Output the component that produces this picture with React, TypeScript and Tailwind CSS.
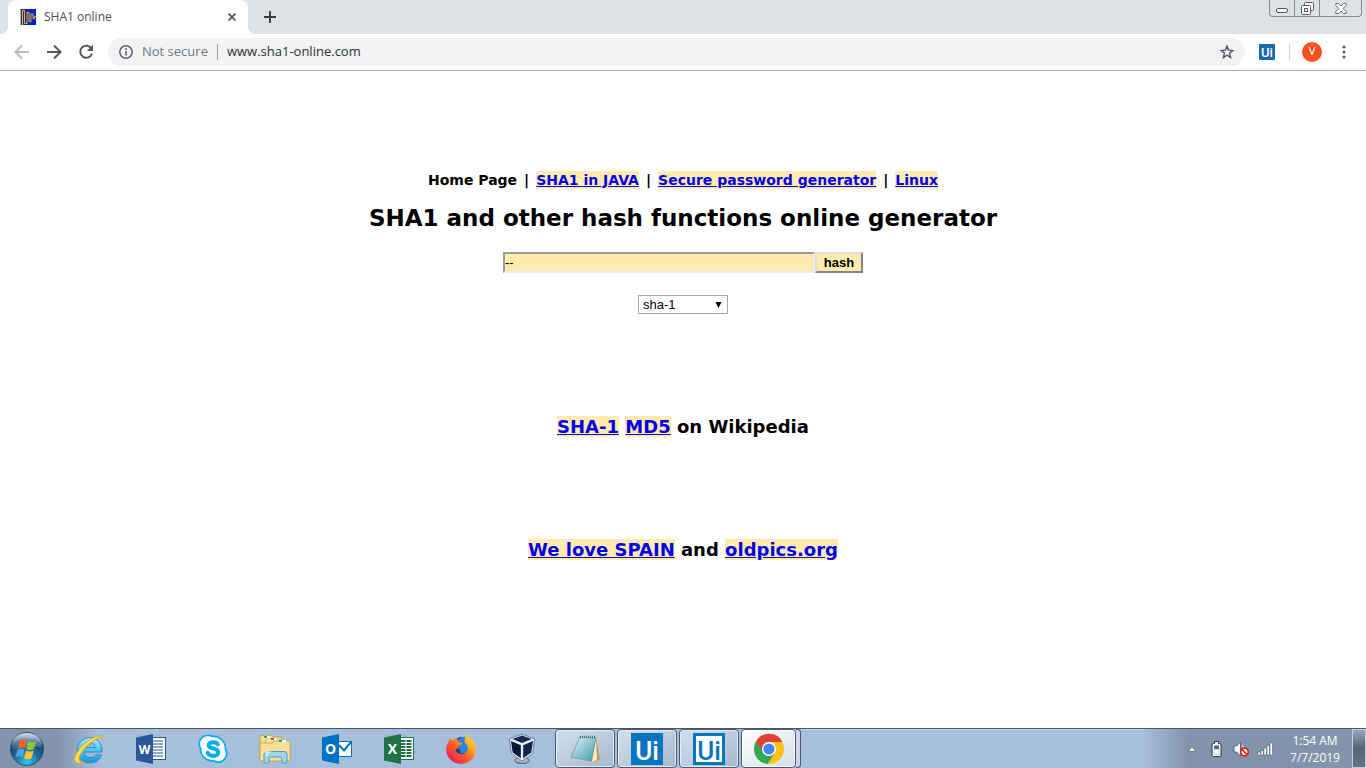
import React, { useState } from "react";

const ui = "font-['Open_Sans','Noto_Sans',sans-serif]";

function Favicon() {
  return (
    <svg className="size-4" viewBox="0 0 16 16" aria-hidden="true">
      <rect width="16" height="16" fill="#0a22c8" />
      <path d="M.5 0v16M2.500 16V1.500h2V14.500h2.500V3.500h2v9h2V5h2v4.500h1.500V7.500H16" fill="none" stroke="#e8b80e" strokeWidth="1" />
    </svg>
  );
}

function UiMark({ className }: { className: string }) {
  return <span className={`flex items-center justify-center font-['Roboto',sans-serif] font-medium leading-none ${className}`}>Ui</span>;
}

function TabStrip() {
  return (
    <div className="flex h-[34px] items-start justify-between bg-[#dee1e6]">
      <div className="flex h-full items-center pl-2">
        <div className="relative flex h-full w-60 items-center rounded-t-lg bg-white pl-3 pr-2">
          <span className="absolute -left-2 bottom-0 size-2 bg-[radial-gradient(circle_at_top_left,transparent_8px,white_8px)]" />
          <span className="absolute -right-2 bottom-0 size-2 bg-[radial-gradient(circle_at_top_right,transparent_8px,white_8px)]" />
          <Favicon />
          <span className="ml-2 flex-1 text-xs text-[#4b4f54]">SHA1 online</span>
          <button aria-label="Close tab" className="flex size-4 items-center justify-center">
            <svg className="size-2" viewBox="0 0 8 8" fill="none" stroke="#4f5358" strokeWidth="1.600"><path d="M.5.5l7 7M7.500.5l-7 7" /></svg>
          </button>
        </div>
        <button aria-label="New tab" className="ml-3.5 flex size-4 items-center justify-center">
          <svg className="size-3" viewBox="0 0 12 12" fill="none" stroke="#3c4043" strokeWidth="2"><path d="M6 0v12M0 6h12" /></svg>
        </button>
      </div>
      <div className="mr-1 flex h-[17px] rounded-b border border-t-0 border-[#85888d]">
        <button aria-label="Minimize" className="flex w-[25px] items-end justify-center border-r border-[#85888d] pb-[3px]">
          <svg width="12" height="5" viewBox="0 0 12 5"><rect x=".5" y=".5" width="11" height="4" rx="1.500" fill="#fff" stroke="#55585c" /></svg>
        </button>
        <button aria-label="Restore" className="flex w-[25px] items-center justify-center border-r border-[#85888d]">
          <svg width="13" height="13" viewBox="0 0 13 13" fill="#fff" stroke="#55585c"><rect x="3.500" y=".5" width="9" height="8" rx="1" /><rect x=".5" y="3.500" width="9" height="9" rx="1" /><rect x="3.500" y="6.500" width="3" height="3" /></svg>
        </button>
        <button aria-label="Close" className="flex w-[41px] items-center justify-center">
          <svg width="12" height="11" viewBox="0 0 12 11"><path d="M.8.5h2.700L6 3 8.500.5h2.700v1.800L8.200 5.500l3 3v2H8.500L6 8l-2.500 2.500H.8v-2l3-3-3-3.200z" fill="#fff" stroke="#66696d" /></svg>
        </button>
      </div>
    </div>
  );
}

function Toolbar() {
  return (
    <div className="flex h-[37px] items-center border-b border-[#b3b3b3] bg-white px-3.5">
      <div className="flex items-center gap-4">
        <button aria-label="Back"><svg className="size-4" viewBox="0 0 16 16" fill="none" stroke="#babcbe" strokeWidth="1.900"><path d="M15 8H2M8 1.500L1.500 8 8 14.500" /></svg></button>
        <button aria-label="Forward"><svg className="size-4" viewBox="0 0 16 16" fill="none" stroke="#55585d" strokeWidth="2"><path d="M1 8h13M8 1.500L14.500 8 8 14.500" /></svg></button>
        <button aria-label="Reload"><svg className="size-4" viewBox="0 0 16 16"><path d="M13.600 5A6 6 0 1 0 14 9.500" fill="none" stroke="#55585d" strokeWidth="2" /><path d="M15 .8V7H8.800z" fill="#55585d" /></svg></button>
      </div>
      <div className="ml-3.5 flex h-7 flex-1 items-center rounded-full bg-[#f1f3f4] pl-[11px] pr-2.5">
        <svg className="size-3.5" viewBox="0 0 14 14"><circle cx="7" cy="7" r="6.200" fill="none" stroke="#5f6368" strokeWidth="1.500" /><path d="M7 6v4.500M7 3.300V5" stroke="#5f6368" strokeWidth="1.600" /></svg>
        <span className="ml-[9px] text-[13px] text-[#74777b]">Not secure</span>
        <span className="ml-[9px] mr-[9px] h-4 w-px bg-[#9b9ea2]" />
        <input aria-label="Address" defaultValue="www.sha1-online.com" className="min-w-0 flex-1 bg-transparent text-[13px] text-[#2d3034] outline-none" />
        <button aria-label="Bookmark this page"><svg className="size-4" viewBox="0 0 16 16"><path d="M8 2.200l1.600 3.900 4.200.4-3.200 2.800 1 4.100L8 11.200l-3.600 2.200 1-4.100-3.200-2.800 4.200-.4z" fill="none" stroke="#4f5358" strokeWidth="1.400" /></svg></button>
      </div>
      <button aria-label="UiPath extension" className="ml-3.5"><UiMark className="size-4 rounded-[1px] bg-[#1b67b0] text-[13px] text-white" /></button>
      <span className="ml-3.5 h-4 w-px bg-[#cfd1d4]" />
      <button aria-label="Profile" className="ml-3 flex size-5 items-center justify-center rounded-full bg-[#f4511e] font-['Roboto',sans-serif] text-[11px] text-white">V</button>
      <button aria-label="Menu" className="ml-3.5 flex w-4 justify-center"><svg width="4" height="14" viewBox="0 0 4 14" fill="#55585d"><circle cx="2" cy="2" r="1.500" /><circle cx="2" cy="7" r="1.500" /><circle cx="2" cy="12" r="1.500" /></svg></button>
    </div>
  );
}

function PageLink({ children }: { children: React.ReactNode }) {
  return <a href="#" className="bg-[#ffebad] text-[#0000ee] underline">{children}</a>;
}

function HashPage() {
  const [text, setText] = useState("--");
  return (
    <main className="flex flex-1 flex-col items-center bg-white pt-[100px] font-['DejaVu_Sans',sans-serif] font-bold text-black">
      <nav className="flex flex-wrap justify-center gap-x-[7px] text-sm leading-[18px]">
        <span>Home Page</span>
        <span>|</span>
        <PageLink>SHA1 in JAVA</PageLink>
        <span>|</span>
        <PageLink>Secure password generator</PageLink>
        <span>|</span>
        <PageLink>Linux</PageLink>
      </nav>
      <h1 className="mt-3.5 text-[23px] leading-[30px]">SHA1 and other hash functions online generator</h1>
      <form className="mt-[19px] flex flex-col items-center font-['Liberation_Sans',sans-serif] text-[13px]" onSubmit={(e) => e.preventDefault()}>
        <div className="flex h-[21px]">
          <input aria-label="Text to hash" value={text} onChange={(e) => setText(e.target.value)} className="w-[312px] border-2 border-b-[#eee] border-l-[#9a9a9a] border-r-[#eee] border-t-[#9a9a9a] bg-[#ffebad] font-normal outline-none" />
          <button className="flex w-12 items-center justify-center border-2 border-b-[#858585] border-l-[#ddd] border-r-[#858585] border-t-[#ddd] bg-[#ffebad] font-bold">hash</button>
        </div>
        <div className="mt-[22px] grid">
          <select aria-label="Hash function" className="col-start-1 row-start-1 h-[19px] w-[90px] appearance-none border border-[#a9a9a9] bg-white pl-1 font-normal leading-4">
            <option>sha-1</option>
            <option>md5</option>
            <option>sha-256</option>
            <option>sha-512</option>
          </select>
          <svg className="pointer-events-none col-start-1 row-start-1 mr-1.5 self-center justify-self-end" width="7" height="6" viewBox="0 0 7 6"><path d="M.5 0h6L3.500 6z" /></svg>
        </div>
      </form>
      <p className="mt-[102px] text-lg leading-[22px]"><PageLink>SHA-1</PageLink> <PageLink>MD5</PageLink> on Wikipedia</p>
      <p className="mt-[101px] text-lg leading-[22px]"><PageLink>We love SPAIN</PageLink> and <PageLink>oldpics.org</PageLink></p>
    </main>
  );
}

function StartOrb() {
  return (
    <svg width="36" height="36" viewBox="0 0 36 36">
      <defs>
        <radialGradient id="orb" cx=".5" cy=".9" r=".85"><stop offset="0" stopColor="#39c5ed" /><stop offset=".45" stopColor="#1a6b9e" /><stop offset=".8" stopColor="#1e3e62" /><stop offset="1" stopColor="#7894ad" /></radialGradient>
        <linearGradient id="shine" x2="0" y2="1"><stop offset="0" stopColor="#e8f2fa" stopOpacity=".75" /><stop offset="1" stopColor="#aac6dc" stopOpacity=".15" /></linearGradient>
      </defs>
      <circle cx="18" cy="18" r="16.500" fill="url(#orb)" stroke="#35536c" />
      <path d="M3 17C2 7 10 2 18 2s16 5 15 15c-8-4-20 4-30 0z" fill="url(#shine)" />
      <path d="M11 9.500c2.200-1.500 5-1.300 7-.2l-2 8c-2.200-1-5-1.200-7.200.2z" fill="#ef6325" />
      <path d="M19.300 10.200c2.200 1 5 1.500 7.800.2l-2.200 7.800c-2.500 1.300-5.300 1-7.600 0z" fill="#8ac53e" />
      <path d="M8.500 18.800c2.200-1.400 5-1.200 7.100-.2l-2 7.500c-2.200-1.100-4.900-1.200-7.100.2z" fill="#49a6df" />
      <path d="M17 19.500c2.200 1 5 1.500 7.700.2l-2.200 7.500c-2.500 1.300-5.200 1.100-7.500 0z" fill="#fdc52c" />
    </svg>
  );
}

function ExplorerE() {
  return (
    <svg width="32" height="32" viewBox="0 0 32 32">
      <defs><linearGradient id="ie" x2="0" y2="1"><stop offset="0" stopColor="#a2e9fd" /><stop offset=".5" stopColor="#4fc4f3" /><stop offset="1" stopColor="#1c94d8" /></linearGradient></defs>
      <path d="M29 19H11.200c.2 3.700 2.500 5.600 5.900 5.600 2.500 0 4.200-.9 5.200-2.700h6C26.600 27.400 22.400 30 16.700 30 9.400 30 4.300 24.900 4.300 17.600c0-7.400 5.200-12.900 12.500-12.900C24.400 4.700 29.500 10.700 29 19zM11.300 14.700h11c-.4-3.200-2.500-5.100-5.500-5.100s-5 2-5.500 5.100z" fill="url(#ie)" stroke="#2387c4" strokeWidth=".9" />
      <path d="M29.500 7.500c.8-4-1.500-5.500-6-4C14 6.500 3 17 1.800 25.700c-.5 4.500 3.600 5.500 9.200 3-3.600.9-5.600-.4-5-3.600C7.400 17.800 17.500 8 25.500 4.800c2.500-.8 4.200 0 4 2.700z" fill="#ffe14a" stroke="#e5a71c" strokeWidth=".9" />
    </svg>
  );
}

function OfficeDoc({ letter, color, kind }: { letter: string; color: string; kind: "lines" | "grid" | "mail" }) {
  return (
    <svg width="32" height="32" viewBox="0 0 32 32">
      {kind === "mail" ? (
        <g><rect x="17" y="8.500" width="13.500" height="15" fill="#fff" stroke={color} /><path d="M18 12l5 5.500L30 9" fill="none" stroke={color} strokeWidth="2" /></g>
      ) : (
        <g>
          <rect x="16" y="4.500" width="14.500" height="22" fill="#fff" stroke={color} />
          {kind === "lines" ? <path d="M18 8h10M18 11h10M18 14h10M18 17h10M18 20h10M18 23h10" stroke={color} strokeWidth="1.200" /> : <path d="M18 8h4.500m1 0h5M18 11h4.500m1 0h5M18 14h4.500m1 0h5M18 17h4.500m1 0h5M18 20h4.500m1 0h5M18 23h4.500m1 0h5" stroke={color} strokeWidth="2" />}
        </g>
      )}
      <path d="M1 4.500L18 1v30L1 27.500z" fill={color} />
      <text x="9.500" y="21" textAnchor="middle" fill="#fff" className={letter === "W" ? "font-['Open_Sans',sans-serif] text-[12px] font-bold" : "font-['Open_Sans',sans-serif] text-[14px] font-bold"}>{letter}</text>
    </svg>
  );
}

function Skype() {
  return (
    <svg width="32" height="32" viewBox="0 0 32 32">
      <path d="M10 2.500c2-.4 4 0 5.500 1C23 3 29 9 28.500 16.500c3.500 6-1.500 13-8 12.500-1.300-.1-2.700-.5-4-1.200C9 28.500 3 22.500 3.600 15.200 0 10 4 3.200 10 2.500z" fill="#fff" stroke="#00aff0" strokeWidth="1.700" />
      <path d="M20.800 11.500c-.8-1.700-2.600-2.300-4.700-2.300-2.700 0-4.500 1.200-4.500 3.100 0 4.300 9.500 2.200 9.500 6.900 0 2.400-2.100 3.700-5 3.700-2.600 0-4.500-1-5.400-3.100" fill="none" stroke="#00aff0" strokeWidth="4" strokeLinecap="round" />
    </svg>
  );
}

function Folders() {
  return (
    <svg width="34" height="32" viewBox="0 0 34 32">
      <g stroke="#c2a449" strokeWidth=".9">
        <path d="M2 4l1.500-1.500h10L15 4h9v20H2z" fill="#f6df8b" /><path d="M8 6.500L9.500 5h10L21 6.500h7V26H8z" fill="#f8e59c" /><path d="M2 10h12l2-2h15l1 1v19H2z" fill="#f5e095" />
      </g>
      <path d="M6 4h6M13 6h6M21 8h7" stroke="#fff" strokeWidth="2.400" /><path d="M6 4h3" stroke="#23a558" strokeWidth="2" /><path d="M13 6h3" stroke="#d84838" strokeWidth="2" /><path d="M21 8h3" stroke="#348acb" strokeWidth="2" />
      <path d="M6 30V21q0-2.500 3-2.500h17q3 0 3 2.500v9h-5v-4q0-2-2-2H13q-2 0-2 2v4z" fill="#9bd5ee" stroke="#529db9" />
      <path d="M9 15v8M5 19h8" stroke="#fff" strokeWidth=".9" />
    </svg>
  );
}

function Firefox() {
  return (
    <svg width="32" height="32" viewBox="0 0 32 32">
      <defs><linearGradient id="fox" x1="1" y1="0" x2=".1" y2="1"><stop offset="0" stopColor="#fff14b" /><stop offset=".3" stopColor="#ffb31d" /><stop offset=".6" stopColor="#ff5b27" /><stop offset="1" stopColor="#e80a63" /></linearGradient></defs>
      <circle cx="17" cy="15" r="11" fill="#173b98" />
      <path d="M12 8c2-3.500 6-5.500 10-3.500 4 3 5 10 2 15l-8 1z" fill="#2587e5" />
      <path d="M5 5c1 1.500 2 2 3.300 2.200C9.500 5.200 11.300 4.500 13.300 4c-1 1.500-1.300 2.500-.8 3.700 1.300 1.800 3.200 1.400 5.100 2-.5 1.800-2 2.200-3.800 3.400-.8 1 .3 1.800-.2 3.300-1.200-.7-2.200-.8-3.200-.2 1 3.600 4 5.500 7.500 4.800 3-.6 5-3 5.100-6 .1-4-5.200-5-3-10C20.500 3.500 21.500 2 22 .8c1 4.200 7.800 6.300 8.800 13.300C31.900 22.900 26 30.600 16.500 30.800 7.500 31 1 24 1.200 16.200c.1-4.200 2-7 3-9z" fill="url(#fox)" />
    </svg>
  );
}

function VirtualBox() {
  return (
    <svg width="32" height="32" viewBox="0 0 32 32">
      <ellipse cx="15" cy="27.500" rx="7" ry="3" fill="#a9b5c6" stroke="#5e6f89" strokeWidth="1.200" />
      <path d="M15 1l12.500 5-1.800 14.500L15 28 4.300 20.500 2.500 6z" fill="#e6edf4" stroke="#5a6b85" strokeWidth=".8" />
      <path d="M15 2.500L24.500 6 15 10 5.500 6z" fill="#17294f" /><path d="M4 8l9.800 4.200v13L5.700 19.500z" fill="#0b1939" /><path d="M26 8l-9.800 4.200v13l8.100-5.700z" fill="#10244d" />
    </svg>
  );
}

function Notepad() {
  return (
    <svg width="32" height="32" viewBox="0 0 32 32">
      <defs><linearGradient id="pad" x2="1" y2="1"><stop offset="0" stopColor="#dff4f5" /><stop offset="1" stopColor="#429bac" /></linearGradient></defs>
      <path d="M27 4l4 22-4 3-8-1z" fill="#c79b54" /><path d="M27 5l1 22-5 2z" fill="#f3ead0" />
      <path d="M11 4l16 1-5 23-20-4z" fill="url(#pad)" stroke="#509ba7" strokeWidth=".7" />
      <path d="M11 4h16" stroke="#60717a" strokeWidth="2.400" strokeDasharray="1 1" />
    </svg>
  );
}

function Chrome() {
  return (
    <svg width="32" height="32" viewBox="0 0 32 32">
      <circle cx="16" cy="16" r="15" fill="#fbc116" />
      <path d="M16 16L3 8.500A15 15 0 0 0 14.500 31L22 19.500z" fill="#31a852" />
      <path d="M3 8.500A15 15 0 0 1 29.400 9H16a7 7 0 0 0-6.100 10.500z" fill="#db4437" />
      <circle cx="16" cy="16" r="7" fill="#fff" /><circle cx="16" cy="16" r="5.600" fill="#4285f4" />
    </svg>
  );
}

const slots: { name: string; icon: React.ReactNode; open?: boolean }[] = [
  { name: "Internet Explorer", icon: <ExplorerE /> },
  { name: "Word", icon: <OfficeDoc letter="W" color="#2b579a" kind="lines" /> },
  { name: "Skype", icon: <Skype /> },
  { name: "File Explorer", icon: <Folders /> },
  { name: "Outlook", icon: <OfficeDoc letter="O" color="#0072c6" kind="mail" /> },
  { name: "Excel", icon: <OfficeDoc letter="X" color="#217346" kind="grid" /> },
  { name: "Firefox", icon: <Firefox /> },
  { name: "VirtualBox", icon: <VirtualBox /> },
  { name: "Notepad", icon: <Notepad />, open: true },
  { name: "UiPath Robot", icon: <UiMark className="size-8 bg-[#0875c1] pt-1 text-[26px] text-white" />, open: true },
  { name: "UiPath Studio", icon: <UiMark className="size-8 border-[3px] border-[#0875c1] bg-white pt-1 text-[26px] text-[#0875c1]" />, open: true },
];

function Taskbar() {
  return (
    <footer className="flex h-10 items-center justify-between border-t border-[#48566a] bg-[#a6bfdd] shadow-[inset_0_1px_0_#c6d6e8]">
      <div className="flex h-full items-center">
        <button aria-label="Start" className="flex h-full w-[58px] items-center bg-[#8294ab] pl-[9px]"><StartOrb /></button>
        <div className="flex h-full items-center bg-[linear-gradient(90deg,#8294ab,#a6bfdd_40px)]">
          {slots.map((s) => (
            <div key={s.name} className="flex h-full w-[62px] justify-center">
              <button aria-label={s.name} className={s.open ? "flex w-[60px] items-center justify-center rounded-sm border border-[#47586f] bg-linear-to-br from-[#d5dfeb] to-[#a6b8ce] shadow-[inset_0_0_0_1px_#e6edf5]" : "flex w-[60px] items-center justify-center"}>{s.icon}</button>
            </div>
          ))}
          <div className="ml-px flex h-full">
            <button aria-label="Chrome" className="flex w-[55px] items-center justify-center rounded-sm border border-[#47586f] bg-linear-to-br from-white to-[#d3deea] shadow-[inset_0_0_0_1px_#fff]"><Chrome /></button>
            <span className="h-full w-[5px] rounded-r-sm border border-l-0 border-[#47586f] bg-[#ccd8e6]" />
          </div>
        </div>
      </div>
      <div className="flex h-full items-center bg-[linear-gradient(90deg,#a6bfdd,#8294ab_44px)] pl-[42px]">
        <button aria-label="Show hidden icons" className="flex w-3 justify-center"><svg width="10" height="6" viewBox="0 0 10 6"><path d="M5 .5L9 5.500H1z" fill="#fff" stroke="#4c5e76" strokeWidth=".7" /></svg></button>
        <svg className="ml-3" width="13" height="16" viewBox="0 0 13 16"><path d="M4.500.5h4v2h1q1.500 0 1.500 1.500v10q0 1.500-1.500 1.500h-6Q2 15.500 2 14V4q0-1.500 1.500-1.500h1z" fill="#fff" stroke="#263444" /><path d="M4 4.500h5V8H4z" fill="#53647a" /><path d="M4 8h5v5.500H4z" fill="#fff" stroke="#8b98a8" strokeWidth=".5" /></svg>
        <svg className="ml-2.5" width="16" height="16" viewBox="0 0 16 16"><path d="M1 5h2.500L7.500 1v14l-4-4H1z" fill="#f2f5f8" stroke="#455366" strokeWidth=".8" /><path d="M9.500 4q1.500 2 .5 4" stroke="#eef2f5" fill="none" /><circle cx="11.500" cy="11" r="3.800" fill="#fff" stroke="#e01e1e" strokeWidth="1.700" /><path d="M9 8.500l5 5" stroke="#e01e1e" strokeWidth="1.700" /></svg>
        <svg className="ml-2" width="17" height="14" viewBox="0 0 17 14" fill="#fff" stroke="#3f4e61" strokeWidth=".5"><path d="M1 10h2.500v3H1zM4 8.500h2.500V13H4zM7 6h2.500v7H7zM10 3.500h2.500V13H10zM13 1h2.500v12H13z" /></svg>
        <div className="ml-1 flex w-[74px] flex-col items-center text-xs leading-[17px] text-white"><span>1:54 AM</span><span>7/7/2019</span></div>
        <button aria-label="Show desktop" className="h-full w-3.5 border border-[#c3cedb] bg-linear-to-b from-[#98a6b8] via-[#53647b] to-[#63758b]" />
      </div>
    </footer>
  );
}

export default function App() {
  return (
    <div className={`flex min-h-screen flex-col bg-white ${ui}`}>
      <header><TabStrip /><Toolbar /></header>
      <HashPage />
      <Taskbar />
    </div>
  );
}
